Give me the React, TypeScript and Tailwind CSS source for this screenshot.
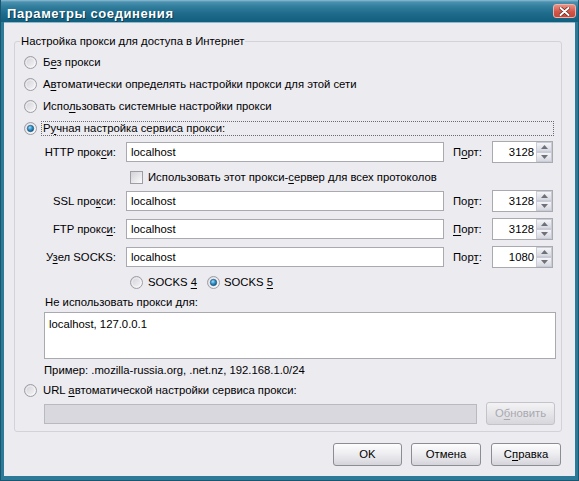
import React from "react";

const FONT = "font-['Liberation_Sans',Arial,sans-serif]";

function Radio({ checked }: { checked?: boolean }) {
  return (
    <svg width="13" height="13" viewBox="0 0 13 13" className="shrink-0">
      <defs>
        <linearGradient id="radioFill" x1="0" y1="0" x2="1" y2="1">
          <stop offset="0" stopColor="#cfcfd5" />
          <stop offset="1" stopColor="#fafafb" />
        </linearGradient>
        <radialGradient id="radioDot" cx="0.4" cy="0.35" r="0.75">
          <stop offset="0" stopColor="#a8dcf6" />
          <stop offset="0.45" stopColor="#3394cc" />
          <stop offset="1" stopColor="#0d4a76" />
        </radialGradient>
      </defs>
      <circle cx="6.5" cy="6.5" r="6" fill="url(#radioFill)" stroke="#9d9da6" />
      <circle cx="6.5" cy="6.5" r="4.5" fill="none" stroke="#ffffff" strokeOpacity="0.5" />
      {checked && <circle cx="6.5" cy="6.5" r="3.2" fill="url(#radioDot)" stroke="#174f78" strokeWidth="0.6" />}
    </svg>
  );
}

function Checkbox() {
  return (
    <div className="w-[13px] h-[13px] shrink-0 border border-[#9d9da6] bg-[linear-gradient(135deg,#d3d3d8,#fbfbfc)]" />
  );
}

function TextBox({ value, width }: { value: string; width: string }) {
  return (
    <div className={`${width} h-[20px] border border-[#a9a9b0] bg-white pl-[4px] flex items-center text-black`}>
      {value}
    </div>
  );
}

function SpinArrow({ up }: { up?: boolean }) {
  return (
    <svg width="7" height="4" viewBox="0 0 7 4">
      <path d={up ? "M0 4 L3.5 0 L7 4 Z" : "M0 0 L3.5 4 L7 0 Z"} fill="#70707a" />
    </svg>
  );
}

function PortBox({ value }: { value: string }) {
  return (
    <div className="w-[61px] h-[22px] border border-[#a9a9b0] bg-white flex">
      <div className="flex-1 flex items-center justify-end pr-[2px]">{value}</div>
      <div className="w-[16px] flex flex-col">
        <div className="flex-1 flex items-center justify-center border border-[#c9ccd6] bg-[linear-gradient(to_bottom,#f4f5f8,#d5d8e0)]">
          <SpinArrow up />
        </div>
        <div className="flex-1 flex items-center justify-center border border-[#c9ccd6] bg-[linear-gradient(to_bottom,#f4f5f8,#d5d8e0)]">
          <SpinArrow />
        </div>
      </div>
    </div>
  );
}

function Key({ children }: { children: React.ReactNode }) {
  return <span className="underline underline-offset-[2px] decoration-[1px]">{children}</span>;
}

function ProxyRow({
  label,
  host,
  port,
  portLabel,
  className,
}: {
  label: React.ReactNode;
  host: string;
  port: string;
  portLabel: React.ReactNode;
  className: string;
}) {
  return (
    <div className={`flex items-center h-[22px] ${className}`}>
      <div className="w-[101px] text-right">{label}</div>
      <div className="ml-[10px]">
        <TextBox value={host} width="w-[318px]" />
      </div>
      <div className="ml-[9px] w-[39px]">{portLabel}</div>
      <PortBox value={port} />
    </div>
  );
}

function Button({ children, width, disabled }: { children: React.ReactNode; width: string; disabled?: boolean }) {
  return (
    <div
      className={`${width} h-[23px] rounded-[3px] border flex items-center justify-center ${
        disabled
          ? "border-[#c3c3c9] text-[#a9a9b0] bg-[linear-gradient(to_bottom,#f3f3f5,#e3e3e7_60%,#d6d6db)]"
          : "border-[#8c8c95] text-black bg-[linear-gradient(to_bottom,#fdfdfe,#ececf0_50%,#d4d4da)]"
      }`}
    >
      {children}
    </div>
  );
}

export default function App() {
  return (
    <div className={`w-[579px] h-[481px] flex flex-col bg-[#2d7a98] border-l border-r border-b border-[#1a5670] text-[11.3px] leading-[13px] text-black ${FONT}`}>
      {/* Title bar */}
      <div className="h-[22px] shrink-0 flex items-center justify-between pl-[6px] pr-[2px] bg-[linear-gradient(to_bottom,#8ebdd2_0px,#4b91af_2px,#2f7c9b_7px,#1f6c8c_13px,#12607f_21px)]">
        <span className="pt-[4px] text-white font-bold text-[13px] tracking-[0.6px] [text-shadow:1px_1px_0_#0d3d52]">
          Параметры соединения
        </span>
        <div className="w-[23px] h-[14px] rounded-[3px] border border-[#f0b3a9] bg-[linear-gradient(to_bottom,#e99082,#d2574a_55%,#c4473a)] flex items-center justify-center">
          <svg width="11" height="9" viewBox="0 0 11 9">
            <path d="M1.5 1 L9.5 8 M9.5 1 L1.5 8" stroke="#6a2018" strokeWidth="3.4" strokeLinecap="round" />
            <path d="M1.5 1 L9.5 8 M9.5 1 L1.5 8" stroke="#ffffff" strokeWidth="2" strokeLinecap="round" />
          </svg>
        </div>
      </div>

      {/* Body */}
      <div className="flex-1 mx-[3px] mb-[4px] bg-[#ecebf0] border-t border-[#8fb8cb] flex flex-col pl-[10px]">
        <div className="relative mt-[18px] w-[548px] border border-[#d2d2d8] rounded-[3px] pt-[9px] pb-[6px]">
          <span className="absolute -top-[7px] left-[5px] px-[1px] bg-[#ecebf0]">
            Настройка прокси для доступа в Интернет
          </span>

          {[
            <>Б<Key>е</Key>з прокси</>,
            <><span>А</span><Key>в</Key>томатически определять настройки прокси для этой сети</>,
            <>Испо<Key>л</Key>ьзовать системные настройки прокси</>,
          ].map((t, i) => (
            <div key={i} className="h-[22px] flex items-center pl-[9px]">
              <Radio />
              <div className="ml-[4px] border border-transparent pl-[1px]">{t}</div>
            </div>
          ))}
          <div className="h-[22px] flex items-center pl-[9px]">
            <Radio checked />
            <div className="ml-[4px] mr-[7px] flex-1 border border-dotted border-[#6b6b73] pl-[1px] h-[15px] flex items-center">
              Р<Key>у</Key>чная настройка сервиса прокси:
            </div>
          </div>

          <ProxyRow
            className="mt-[2px]"
            label={<>HTTP прок<Key>с</Key>и:</>}
            host="localhost"
            port="3128"
            portLabel={<>П<Key>о</Key>рт:</>}
          />
          <div className="h-[22px] mt-[3px] flex items-center pl-[115px]">
            <Checkbox />
            <span className="ml-[5px]">
              Использовать этот прокси-<Key>с</Key>ервер для всех протоколов
            </span>
          </div>
          <ProxyRow
            className="mt-[2px]"
            label={<>SSL про<Key>к</Key>си:</>}
            host="localhost"
            port="3128"
            portLabel={<>По<Key>р</Key>т:</>}
          />
          <ProxyRow
            className="mt-[6px]"
            label={<>FTP прокс<Key>и</Key>:</>}
            host="localhost"
            port="3128"
            portLabel={<><Key>П</Key>орт:</>}
          />
          <ProxyRow
            className="mt-[6px]"
            label={<>У<Key>з</Key>ел SOCKS:</>}
            host="localhost"
            port="1080"
            portLabel={<>Пор<Key>т</Key>:</>}
          />

          <div className="h-[22px] mt-[3px] flex items-center pl-[115px]">
            <div className="w-[77px] flex items-center">
              <Radio />
              <span className="ml-[5px]">
                SOCKS <Key>4</Key>
              </span>
            </div>
            <Radio checked />
            <span className="ml-[4px]">
              SOCKS <Key>5</Key>
            </span>
          </div>

          <div className="h-[14px] mt-[2px] pl-[30px] flex items-center">Не использовать прокси для:</div>
          <div className="ml-[29px] mt-[3px] w-[512px] h-[47px] border border-[#a9a9b0] bg-white pl-[4px] pt-[5px]">
            localhost, 127.0.0.1
          </div>
          <div className="h-[14px] mt-[4px] pl-[29px] flex items-center">
            Пример: .mozilla-russia.org, .net.nz, 192.168.1.0/24
          </div>

          <div className="h-[16px] mt-[5px] flex items-center pl-[9px]">
            <Radio />
            <div className="ml-[4px] border border-transparent pl-[1px]">
              URL <Key>а</Key>втоматической настройки сервиса прокси:
            </div>
          </div>
          <div className="h-[23px] mt-[4px] flex items-center pl-[29px]">
            <div className="w-[433px] h-[20px] border border-[#b9b9c0] bg-[#d9d8de]" />
            <div className="ml-[9px]">
              <Button width="w-[69px]" disabled>
                О<Key>б</Key>новить
              </Button>
            </div>
          </div>
        </div>

        <div className="mt-[11px] flex pl-[319px]">
          <Button width="w-[69px]">OK</Button>
          <div className="ml-[9px]">
            <Button width="w-[70px]">Отмена</Button>
          </div>
          <div className="ml-[10px]">
            <Button width="w-[70px]">
              С<Key>п</Key>равка
            </Button>
          </div>
        </div>
      </div>
    </div>
  );
}
